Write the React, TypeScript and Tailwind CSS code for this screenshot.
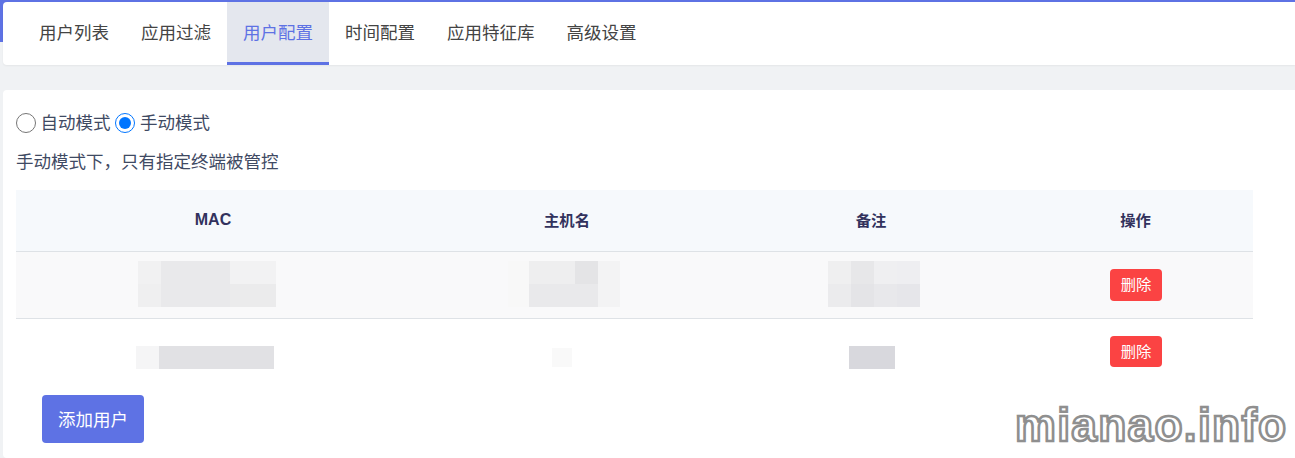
const tabs = ["用户列表", "应用过滤", "用户配置", "时间配置", "应用特征库", "高级设置"];

function Mosaic({ cols, cells, className }: { cols: string; cells: string[]; className: string }) {
  return (
    <div className={"grid " + cols + " " + className}>
      {cells.map((c, i) => (
        <div key={i} className={c} />
      ))}
    </div>
  );
}

function DeleteButton({ className }: { className: string }) {
  return (
    <button className={"w-[52px] rounded-[4px] bg-[#fb4343] text-white text-[15.3px] leading-none pb-[2px] " + className}>删除</button>
  );
}

export default function App() {
  return (
    <div className="relative w-[1295px] h-[458px] overflow-hidden bg-[#f0f2f4] bg-[linear-gradient(#5e72e4,#5e72e4)] bg-no-repeat bg-[length:100%_42px] pt-[2px] pl-[3px] text-[17.5px] text-[#3f4a63] font-['Noto_Sans_CJK_SC','Noto_Sans',sans-serif]">
      <div className="flex h-[63px] pl-[20px] bg-white rounded-l-[4px] shadow-[0_1px_2px_rgba(0,0,0,0.05)]">
        {tabs.map((t) => (
          <div
            key={t}
            className={
              t === "用户配置"
                ? "px-[16px] flex items-center border-b-[3px] border-[#5e72e4] bg-[#e4e7ee] text-[#5e72e4]"
                : "px-[16px] flex items-center border-b-[3px] border-transparent text-[#444444]"
            }
          >
            {t}
          </div>
        ))}
      </div>

      <div className="mt-[25px] h-[368px] bg-white rounded-l-[4px] pl-[13px] pt-[19px]">
        <div className="flex items-center h-[26px]">
          <input type="radio" name="mode" readOnly className="w-[20px] h-[20px] m-0 mr-[4.5px] mt-[2px] appearance-auto" />
          <span>自动模式</span>
          <input type="radio" name="mode" readOnly checked className="w-[20px] h-[20px] m-0 ml-[4.5px] mr-[5px] mt-[2px] appearance-auto" />
          <span>手动模式</span>
        </div>
        <p className="mt-[13px] h-[26px] leading-[26px]">手动模式下，只有指定终端被管控</p>

        <table className="mt-[16px] w-[1237px] table-fixed border-collapse text-[15.3px] text-[#32325d]">
          <colgroup>
            <col className="w-[394px]" />
            <col className="w-[314px]" />
            <col className="w-[294px]" />
            <col className="w-[235px]" />
          </colgroup>
          <thead>
            <tr className="h-[61px] bg-[#f6f9fc] border-b border-[#dee2e6]">
              <th className="font-bold text-[16px] font-['Liberation_Sans',sans-serif]">MAC</th>
              <th className="font-bold pb-[1px]">主机名</th>
              <th className="font-bold pb-[1px]">备注</th>
              <th className="font-bold pb-[1px]">操作</th>
            </tr>
          </thead>
          <tbody>
            <tr className="h-[67px] bg-[#f9f9fa] border-b border-[#dee2e6]">
              <td>
                <Mosaic
                  className="ml-[122px] w-[138px] mb-[2px]"
                  cols="grid-cols-[23px_69px_46px] grid-rows-[23px_23px]"
                  cells={["bg-[#f1f1f2]", "bg-[#e9e9eb]", "bg-[#f2f2f3]", "bg-[#efeff0]", "bg-[#e9e9eb]", "bg-[#ebebec]"]}
                />
              </td>
              <td>
                <Mosaic
                  className="ml-[98px] w-[112px] mb-[2px]"
                  cols="grid-cols-[21px_46px_23px_22px] grid-rows-[23px_23px]"
                  cells={["bg-[#f8f8f8]", "bg-[#eeeeef]", "bg-[#e4e4e6]", "bg-[#f3f3f4]", "bg-[#f8f8f8]", "bg-[#e9e9eb]", "bg-[#e9e9eb]", "bg-[#f3f3f4]"]}
                />
              </td>
              <td>
                <Mosaic
                  className="ml-[104px] w-[92px] mb-[2px]"
                  cols="grid-cols-[23px_23px_23px_23px] grid-rows-[23px_23px]"
                  cells={["bg-[#efeff0]", "bg-[#e7e7e9]", "bg-[#efeff1]", "bg-[#eeeef1]", "bg-[#ebebed]", "bg-[#e4e4e7]", "bg-[#e8e8eb]", "bg-[#e6e6ea]"]}
                />
              </td>
              <td>
                <div className="ml-[92px] flex"><DeleteButton className="h-[32px]" /></div>
              </td>
            </tr>
            <tr className="h-[66px]">
              <td className="align-top">
                <Mosaic
                  className="ml-[120px] w-[138px] mt-[27px]"
                  cols="grid-cols-[23px_115px] grid-rows-[23px]"
                  cells={["bg-[#f5f5f6]", "bg-[#e1e1e4]"]}
                />
              </td>
              <td className="align-top">
                <Mosaic
                  className="ml-[142px] w-[20px] mt-[29px]"
                  cols="grid-cols-[20px] grid-rows-[19px]"
                  cells={["bg-[#f9f9f9]"]}
                />
              </td>
              <td className="align-top">
                <Mosaic
                  className="ml-[125px] w-[46px] mt-[27px]"
                  cols="grid-cols-[46px] grid-rows-[23px]"
                  cells={["bg-[#d8d8dd]"]}
                />
              </td>
              <td>
                <div className="ml-[92px] flex"><DeleteButton className="h-[31px]" /></div>
              </td>
            </tr>
          </tbody>
        </table>

        <button className="mt-[11px] ml-[26px] w-[102px] h-[48px] rounded-[4px] bg-[#5e72e4] text-white text-[17.5px]">添加用户</button>
      </div>

      <div className="absolute left-[1015px] top-[399px] text-[46px] leading-[52px] font-bold tracking-[1.3px] text-white [-webkit-text-stroke:2.6px_#8f8f8f] [text-shadow:0_0_1px_#bbbbbb] font-['Liberation_Sans',sans-serif]">
        mianao.info
      </div>
    </div>
  );
}
